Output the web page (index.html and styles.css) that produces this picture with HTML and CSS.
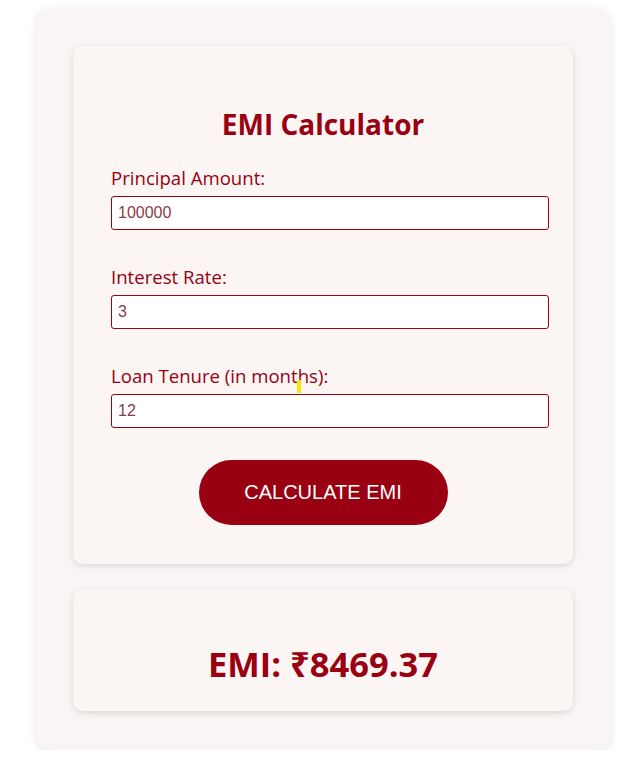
FILE: index.html
```html
<!DOCTYPE html>
<html lang="en">
<head>
<meta charset="utf-8">
<title>EMI Calculator</title>
<link rel="stylesheet" href="styles.css">
</head>
<body>
<div class="wrap">
  <div class="card calc">
    <h2 class="title">EMI Calculator</h2>
    <div class="field">
      <label class="label" for="p">Principal Amount:</label>
      <input class="input" id="p" type="text" value="100000">
    </div>
    <div class="field">
      <label class="label" for="r">Interest Rate:</label>
      <input class="input" id="r" type="text" value="3">
    </div>
    <div class="field field-last">
      <label class="label tenure" for="t">Loan Tenure (in months):<span class="cursor"></span></label>
      <input class="input" id="t" type="text" value="12">
    </div>
    <div class="actions">
      <button class="btn" type="button">CALCULATE EMI</button>
    </div>
  </div>
  <div class="card result">
    <h2 class="emi">EMI: ₹8469.37</h2>
  </div>
</div>
</body>
</html>
```

FILE: styles.css
```css
* { box-sizing: border-box; }
html, body { margin: 0; padding: 0; background: #ffffff; }
body {
  padding: 8px 0 0 36px;
  font-family: "Open Sans", "Noto Sans", sans-serif;
  color: #990011;
}
.wrap {
  width: 575px;
  background: #faf5f5;
  border-radius: 15px;
  padding: 38px 38px 39px 37px;
  box-shadow: 0 2px 8px rgba(0,0,0,0.10);
  display: flex;
  flex-direction: column;
  gap: 25px;
}
.card {
  background: #fbf6f4;
  border-radius: 10px;
  box-shadow: 0 2px 6px rgba(0,0,0,0.12);
}
.calc {
  padding: 59px 38px 39px 38px;
}
.title {
  margin: 0 0 25px 0;
  text-align: center;
  font-size: 28px;
  line-height: 38px;
  font-weight: 700;
  color: #990011;
}
.field { margin-bottom: 37px; position: relative; }
.field-last { margin-bottom: 32px; }
.label {
  display: block;
  font-size: 18.6px;
  line-height: 20px;
  margin-bottom: 8px;
  color: #990011;
  position: relative;
}
.cursor {
  position: absolute;
  left: 186px;
  top: 14px;
  width: 4px;
  height: 13px;
  background: #ffe600;
}
.input {
  display: block;
  width: 438px;
  height: 34px;
  padding: 0 6px;
  border: 1px solid #990011;
  border-radius: 3px;
  background: #ffffff;
  font-family: "Liberation Sans", Arial, sans-serif;
  font-size: 16px;
  color: #8c3a48;
  outline: none;
}
.actions { display: flex; justify-content: center; }
.btn {
  width: 249px;
  height: 65px;
  border: none;
  border-radius: 33px;
  background: #990011;
  color: #ffffff;
  font-family: "Liberation Sans", Arial, sans-serif;
  font-size: 20px;
  cursor: pointer;
}
.result {
  padding: 52px 20px 24px 20px;
}
.emi {
  margin: 0;
  text-align: center;
  font-size: 34.5px;
  line-height: 46px;
  font-weight: 700;
  color: #990011;
}
```
